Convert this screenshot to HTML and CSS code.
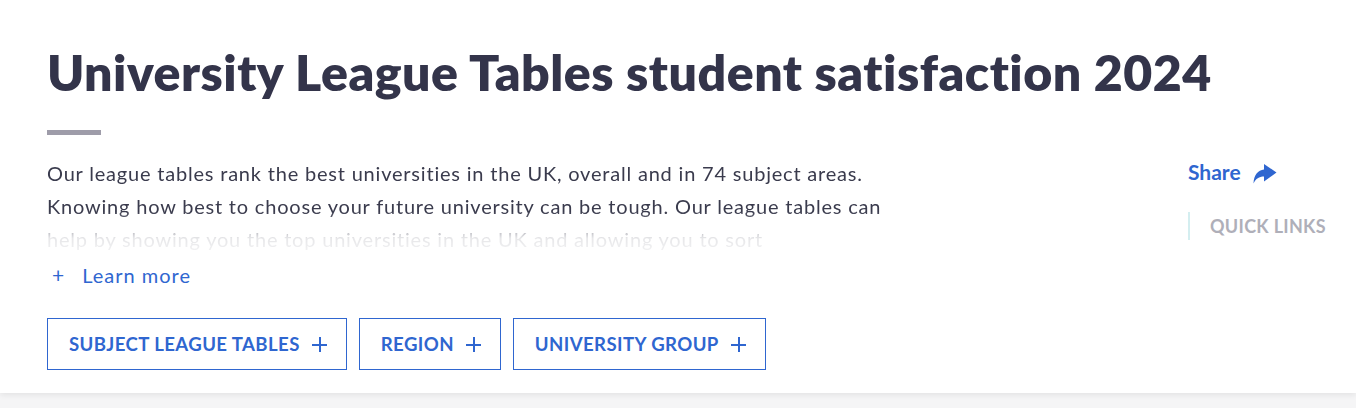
FILE: index.html
```html
<!DOCTYPE html>
<html lang="en">
<head>
<meta charset="utf-8">
<title>University League Tables student satisfaction 2024</title>
<link rel="stylesheet" href="styles.css">
</head>
<body>
<header class="hero">
  <div class="hero-inner">
    <div class="main">
      <h1 class="title">University League Tables student satisfaction 2024</h1>
      <div class="rule"></div>
      <div class="intro">
        <p class="intro-text">Our league tables rank the best universities in the UK, overall and in 74 subject areas. Knowing how best to choose your future university can be tough. Our league tables can help by showing you the top universities in the UK and allowing you to sort</p>
      </div>
      <a class="learn" href="#"><span class="learn-plus">+</span><span>Learn more</span></a>
      <div class="filters">
        <button class="filter">SUBJECT LEAGUE TABLES <span class="plus"></span></button>
        <button class="filter">REGION <span class="plus"></span></button>
        <button class="filter">UNIVERSITY GROUP <span class="plus"></span></button>
      </div>
    </div>
    <aside class="side">
      <a class="share" href="#">Share
        <svg class="share-icon" viewBox="0 0 24 20" width="24" height="20" aria-hidden="true">
          <path d="M11 0 L23.5 8.5 L11 17.5 L11 12.5 C6 12.5 3 14.5 0.5 19.5 C0.8 11 5 6 11 5.5 Z" fill="#2f66d0"/>
        </svg>
      </a>
      <div class="quick">QUICK LINKS</div>
    </aside>
  </div>
</header>
<div class="below"></div>
</body>
</html>
```

FILE: styles.css
```css
html, body {
  margin: 0;
  padding: 0;
  background: #f5f5f6;
}
body {
  font-family: "Lato", "Noto Sans", sans-serif;
}
.hero {
  background: #ffffff;
  height: 393px;
  box-shadow: 0 2px 6px rgba(0, 0, 0, 0.08);
  position: relative;
}
.hero-inner {
  display: flex;
  padding: 0 0 0 47px;
}
.main {
  width: 1141px;
}
.title {
  margin: 0;
  padding-top: 43px;
  font-size: 50px;
  line-height: 59px;
  font-weight: 800;
  color: #33344a;
  letter-spacing: 0.5px;
  white-space: nowrap;
}
.rule {
  width: 54px;
  height: 5px;
  background: #9e9ca9;
  margin-top: 28px;
}
.intro {
  width: 870px;
  margin-top: 22px;
  height: 99px;
  overflow: hidden;
  -webkit-mask-image: linear-gradient(to bottom, #000 0, #000 55%, rgba(0,0,0,0.12) 82%, rgba(0,0,0,0.05) 100%);
  mask-image: linear-gradient(to bottom, #000 0, #000 55%, rgba(0,0,0,0.12) 82%, rgba(0,0,0,0.05) 100%);
}
.intro-text {
  margin: 0;
  font-size: 20px;
  line-height: 33px;
  letter-spacing: 0.8px;
  color: #3a3b4d;
}
.learn {
  display: inline-flex;
  align-items: center;
  gap: 17px;
  margin-top: 6px;
  margin-left: 5px;
  font-size: 20px;
  letter-spacing: 1px;
  line-height: 26px;
  color: #2f66d0;
  text-decoration: none;
}
.learn-plus {
  font-size: 21px;
}
.filters {
  display: flex;
  gap: 12px;
  margin-top: 30px;
}
.filter {
  display: inline-flex;
  align-items: center;
  box-sizing: border-box;
  height: 52px;
  padding: 0 19px 0 21px;
  background: #fff;
  border: 1px solid #2f66d0;
  border-radius: 0;
  font-family: inherit;
  font-size: 18.6px;
  font-weight: 700;
  color: #2f66d0;
  letter-spacing: 0.4px;
  cursor: pointer;
}
.plus {
  position: relative;
  width: 15px;
  height: 15px;
  margin-left: 12px;
}
.plus::before, .plus::after {
  content: "";
  position: absolute;
  background: #2f66d0;
}
.plus::before {
  left: 0;
  top: 7px;
  width: 15px;
  height: 2px;
}
.plus::after {
  left: 7px;
  top: 0;
  width: 2px;
  height: 15px;
}
.side {
  padding-top: 158px;
}
.share {
  display: flex;
  align-items: center;
  gap: 12px;
  font-size: 21px;
  font-weight: 700;
  color: #2f66d0;
  text-decoration: none;
  line-height: 28px;
}
.share-icon {
  margin-top: 3px;
}
.quick {
  margin-top: 26px;
  border-left: 2px solid #d4eef0;
  padding: 3px 0 3px 20px;
  font-size: 18px;
  font-weight: 700;
  letter-spacing: 0.3px;
  color: #afafb9;
  line-height: 22px;
}
.below {
  height: 15px;
}
```
